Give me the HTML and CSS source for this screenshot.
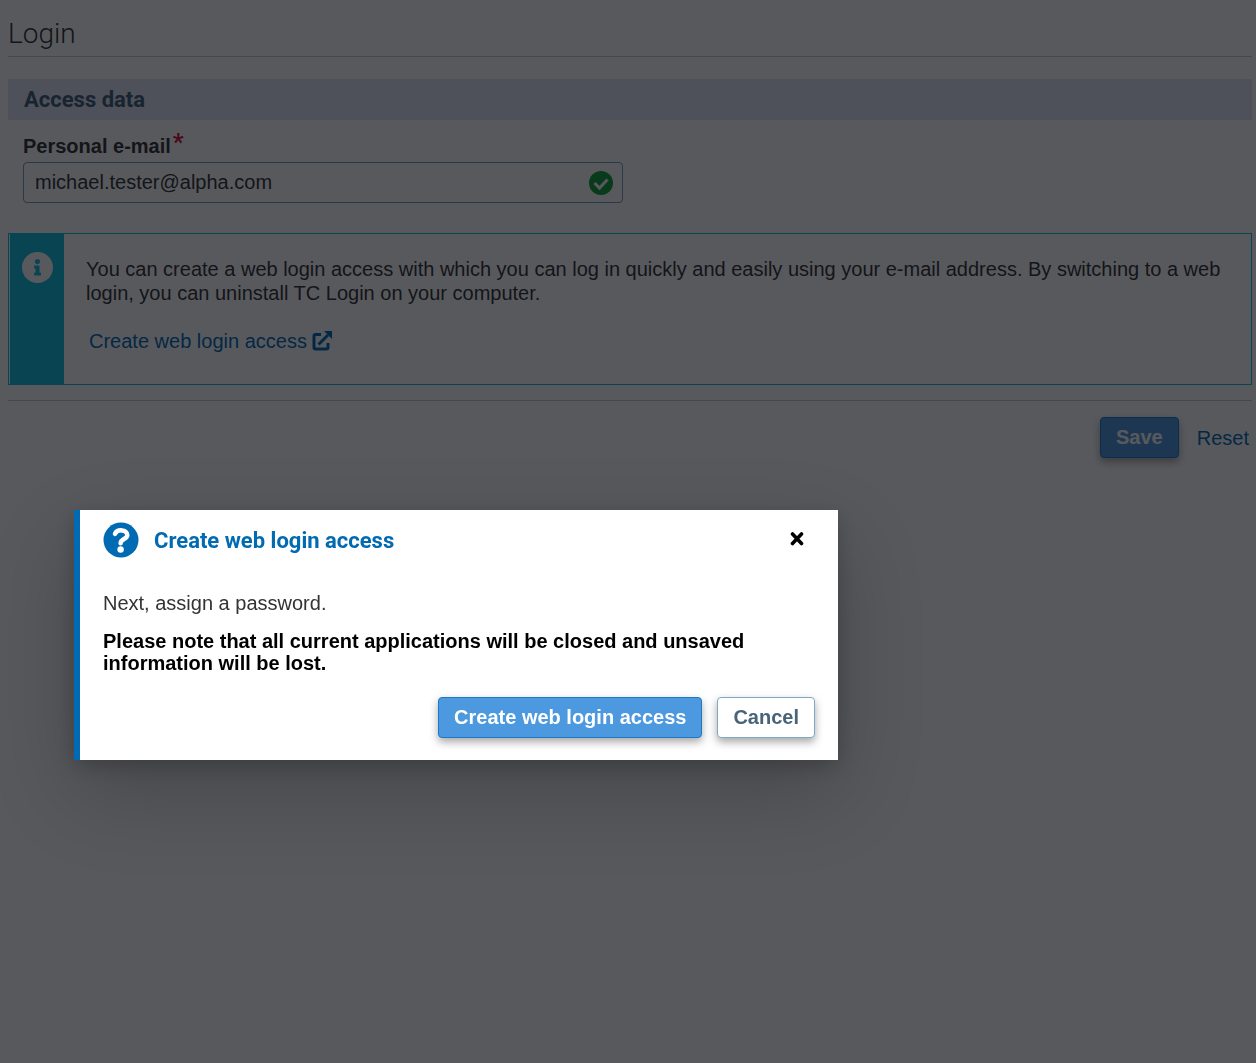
FILE: index.html
```html
<!DOCTYPE html>
<html lang="en">
<head>
  <meta charset="UTF-8" />
  <meta name="viewport" content="width=device-width, initial-scale=1" />
  <title>Login</title>
  <link rel="stylesheet" href="styles.css">
</head>
<body>
  <main class="page">
    <h1>Login</h1>

    <form class="login-form">
      <h2>Access data</h2>

      <div class="field">
        <label for="email">Personal e-mail <span class="required">*</span></label>
        <div class="input-wrap">
          <input type="email" id="email" value="michael.tester@alpha.com" />
          <svg class="valid-icon" viewBox="0 0 24 24" aria-hidden="true">
            <circle cx="12" cy="12" r="12" fill="#12a03c" />
            <path d="M5.500 12l5 5 8-8.500" fill="none" stroke="#fff" stroke-width="3" />
          </svg>
        </div>
      </div>

      <div class="info">
        <div class="info-side">
          <svg class="info-icon" viewBox="8 8 496 496" aria-hidden="true">
            <path fill="#fff" d="M256 8C119.043 8 8 119.083 8 256c0 136.997 111.043 248 248 248s248-111.003 248-248C504 119.083 392.957 8 256 8zm0 110c23.196 0 42 18.804 42 42s-18.804 42-42 42-42-18.804-42-42 18.804-42 42-42zm56 254c0 6.627-5.373 12-12 12h-88c-6.627 0-12-5.373-12-12v-24c0-6.627 5.373-12 12-12h12v-64h-12c-6.627 0-12-5.373-12-12v-24c0-6.627 5.373-12 12-12h64c6.627 0 12 5.373 12 12v100h12c6.627 0 12 5.373 12 12v24z" />
          </svg>
        </div>
        <div class="info-text">
          <p>You can create a web login access with which you can log in quickly and easily using your e-mail address. By switching to a web login, you can uninstall TC Login on your computer.</p>
          <a href="#dialog" class="info-link">Create web login access
            <svg class="link-icon" viewBox="0 0 20 20" aria-hidden="true">
              <path d="M9 3.500H3.500Q2 3.500 2 5v11.500Q2 18 3.500 18H14.500Q16 18 16 16.500V12" fill="none" stroke="currentColor" stroke-width="3" />
              <path d="M6.500 13.500L16 4" fill="none" stroke="currentColor" stroke-width="3" />
              <path d="M12 0h8v8z" fill="currentColor" />
            </svg>
          </a>
        </div>
      </div>

      <div class="actions">
        <button type="submit" class="btn btn-primary">Save</button>
        <a href="#" class="reset">Reset</a>
      </div>
    </form>
  </main>

  <div class="overlay"></div>

  <div class="dialog" id="dialog" role="dialog" aria-labelledby="dialog-title">
    <div class="dialog-header">
      <svg class="question-icon" viewBox="0 0 36 36" aria-hidden="true">
        <circle cx="18" cy="18" r="17.500" fill="#006ab3" />
        <path d="M12 11.800C14 6.800 24.300 7.300 24.300 13C24.300 17.300 17.600 16.800 17.600 21.300" fill="none" stroke="#fff" stroke-width="4.500" stroke-linecap="round" />
        <circle cx="17.600" cy="27.500" r="3.200" fill="#fff" />
      </svg>
      <h3 id="dialog-title">Create web login access</h3>
      <button type="button" class="close" aria-label="Close">
        <svg viewBox="0 0 14 14" aria-hidden="true">
          <path d="M2.500 2l9 9.500M11.500 2L2.500 11.500" fill="none" stroke="#000" stroke-width="3.600" stroke-linecap="round" />
        </svg>
      </button>
    </div>
    <p class="dialog-text">Next, assign a password.</p>
    <p class="dialog-note">Please note that all current applications will be closed and unsaved information will be lost.</p>
    <div class="dialog-buttons">
      <button type="button" class="btn btn-primary">Create web login access</button>
      <button type="button" class="btn btn-secondary">Cancel</button>
    </div>
  </div>
</body>
</html>
```
FILE: styles.css
```css
* {
  box-sizing: border-box;
}
body {
  margin: 0;
  min-height: 100vh;
  background-color: #fff;
  color: #333;
  font-family: Arial, "Liberation Sans", sans-serif;
  font-size: 20px;
  line-height: 24px;
}
h1, h2, h3, p {
  margin: 0;
}
a {
  color: #006ab3;
  text-decoration: none;
}
.page {
  padding: 8px 4px 8px 8px;
}
h1 {
  padding: 10px 0 6px;
  border-bottom: 1px solid #ccc;
  font-family: Roboto, sans-serif;
  font-size: 28px;
  font-weight: 300;
  line-height: 32px;
}
h2 {
  margin-top: 22px;
  padding: 9px 16px 8px;
  background-color: #dfe4f5;
  color: #3f5f75;
  font-family: Roboto, sans-serif;
  font-size: 22px;
  font-weight: 700;
}
.field {
  max-width: 615px;
  padding: 14px 0 30px 15px;
}
label {
  display: flex;
  align-items: flex-start;
  gap: 2px;
  margin-bottom: 4px;
  font-weight: bold;
}
.required {
  color: #d0103a;
  font-family: Roboto, sans-serif;
  font-size: 24px;
  line-height: 16px;
}
.input-wrap {
  position: relative;
}
input {
  display: block;
  width: 100%;
  height: 41px;
  padding: 0 44px 0 11px;
  border: 1px solid #6f9fbd;
  border-radius: 4px;
  background-color: #fff;
  color: #333;
  font: inherit;
}
.valid-icon {
  position: absolute;
  top: 9px;
  right: 10px;
  width: 24px;
  height: 24px;
}
.info {
  display: flex;
  padding-left: 1px;
  border: 1px solid #0fc0dc;
}
.info-side {
  flex: none;
  width: 54px;
  padding-top: 18px;
  background-color: #0fc0dc;
  text-align: center;
}
.info-icon {
  width: 31px;
  height: 31px;
}
.info-text {
  padding: 23px 22px 31px;
}
.info-link {
  display: inline-flex;
  align-items: center;
  gap: 5px;
  margin: 24px 0 0 3px;
}
.link-icon {
  width: 20px;
  height: 20px;
}
.actions {
  display: flex;
  align-items: center;
  justify-content: flex-end;
  gap: 18px;
  margin-top: 15px;
  padding: 16px 3px 0 0;
  border-top: 1px solid #ccc;
}
.btn {
  height: 41px;
  padding: 0 15px;
  border: 1px solid #1a7ac8;
  border-radius: 4px;
  box-shadow: 0 4px 8px rgba(0,0,0,0.35);
  font-family: inherit;
  font-size: 20px;
  font-weight: bold;
  cursor: pointer;
}
.btn-primary {
  background-color: #4d99df;
  color: #fff;
}
.btn-secondary {
  border-color: #7fa8c4;
  background-color: #fff;
  color: #486478;
}
.overlay {
  position: fixed;
  inset: 0;
  background-color: rgba(6,8,14,0.67);
}
.dialog {
  position: absolute;
  top: 510px;
  left: 74px;
  width: 764px;
  max-width: calc(100% - 90px);
  padding: 12px 23px 22px;
  border-left: 6px solid #006ab3;
  background-color: #fff;
  box-shadow: 0 6px 20px rgba(0,0,0,0.2), 0 32px 80px rgba(0,0,0,0.2);
}
.dialog-header {
  display: flex;
  align-items: center;
  gap: 15px;
}
.question-icon {
  flex: none;
  width: 36px;
  height: 36px;
}
h3 {
  flex: 1;
  padding-top: 2px;
  color: #006ab3;
  font-family: Roboto, sans-serif;
  font-size: 22px;
  font-weight: 700;
}
.close {
  display: flex;
  padding: 10px 11px 12px;
  border: 0;
  background: none;
  cursor: pointer;
}
.close svg {
  width: 14px;
  height: 14px;
}
.dialog-text {
  margin-top: 33px;
}
.dialog-note {
  margin: 15px 0 23px;
  color: #000;
  font-weight: bold;
  line-height: 22px;
}
.dialog-buttons {
  display: flex;
  justify-content: flex-end;
  gap: 15px;
}
```
